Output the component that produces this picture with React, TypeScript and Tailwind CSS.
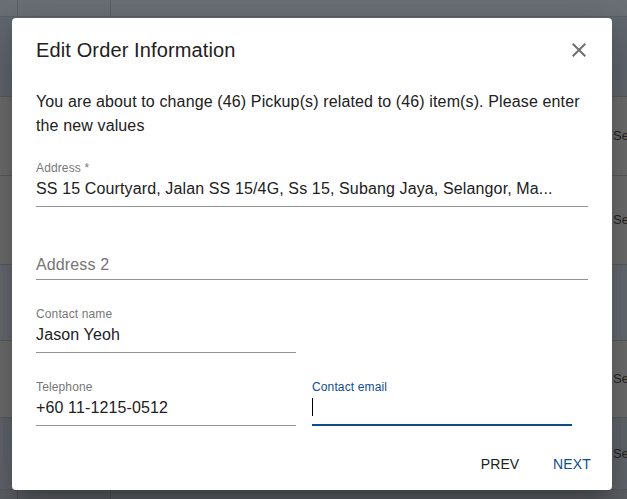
const rows = [
  { h: "h-[80px]", bg: "bg-[#62686f]", cell: "" },
  { h: "h-[79px]", bg: "bg-[#6f6f6f]", cell: "Se" },
  { h: "h-[89px]", bg: "bg-[#6f6f6f]", cell: "Se" },
  { h: "h-[76px]", bg: "bg-[#676c73]", cell: "" },
  { h: "h-[77px]", bg: "bg-[#6f6f6f]", cell: "Se" },
  { h: "h-[72px]", bg: "bg-[#62676d]", cell: "Se" },
];

function Field({
  label,
  value,
  placeholder,
  focused,
}: {
  label?: string;
  value?: string;
  placeholder?: string;
  focused?: boolean;
}) {
  return (
    <div className="flex flex-col">
      <div
        className={`h-[14px] text-xs leading-[14px] ${focused ? "text-[#0d4d8e]" : "text-[#777777]"}`}
      >
        {label}
      </div>
      <div
        className={`flex items-center h-[32px] pt-[4px] pb-[8px] text-base leading-[19px] ${
          focused ? "border-b-2 border-[#0d4d8e]" : "border-b border-[#949494]"
        }`}
      >
        {placeholder ? (
          <span className="pt-[5px] text-[#757575]">{placeholder}</span>
        ) : focused ? (
          <span className="w-px h-[18px] bg-black" />
        ) : (
          <span className="truncate text-[#212121]">{value}</span>
        )}
      </div>
    </div>
  );
}

export default function App() {
  return (
    <div
      className="relative w-[627px] h-[499px] overflow-hidden bg-[#6f6f6f] tracking-[0.008em]"
      style={{ fontFamily: '"Liberation Sans", Arial, sans-serif' }}
    >
      {/* dimmed table behind the dialog */}
      <div className="flex flex-col">
        <div className="flex h-[17px] bg-[#6b7077] border-b border-[#5d6166]">
          <div className="w-[18px] border-r border-[#5d6166]" />
          <div className="w-[93px] border-r border-[#5d6166]" />
        </div>
        {rows.map((r, i) => (
          <div key={i} className={`flex items-center justify-end ${r.h} ${r.bg} border-b border-[#5a5c5e]`}>
            <span className="w-[14px] text-[13px] text-[#262626] overflow-hidden whitespace-nowrap">{r.cell}</span>
          </div>
        ))}
        <div className="flex h-[9px] bg-[#5d6166]">
          <div className="w-[18px] border-r border-[#4f5256]" />
          <div className="w-[93px] border-r border-[#4f5256]" />
        </div>
      </div>

      {/* dialog */}
      <div className="absolute left-[12px] top-[18px] w-[600px] h-[472px] rounded bg-white shadow-[0_11px_15px_-7px_rgba(0,0,0,0.2),0_24px_38px_3px_rgba(0,0,0,0.14),0_9px_46px_8px_rgba(0,0,0,0.12)] flex flex-col">
        <div className="flex items-center justify-between pl-6 pr-[21px] pt-4">
          <h2 className="text-[20px] leading-[32px] text-[#212121]">Edit Order Information</h2>
          <svg width="24" height="24" viewBox="0 0 24 24" className="fill-[#6f6f6f]">
            <path d="M19 6.41L17.59 5 12 10.59 6.41 5 5 6.41 10.59 12 5 17.59 6.41 19 12 13.41 17.59 19 19 17.59 13.41 12z" />
          </svg>
        </div>

        <div className="px-6 mt-6">
          <p className="text-base leading-[24px] text-[#212121]">
            You are about to change (46) Pickup(s) related to (46) item(s). Please enter the new values
          </p>

          <div className="mt-[23px] flex flex-col gap-[27px]">
            <Field label="Address *" value="SS 15 Courtyard, Jalan SS 15/4G, Ss 15, Subang Jaya, Selangor, Ma..." />
            <Field placeholder="Address 2" />
            <div className="grid grid-cols-[260px_260px] gap-x-4">
              <Field label="Contact name" value="Jason Yeoh" />
            </div>
            <div className="grid grid-cols-[260px_260px] gap-x-4">
              <Field label="Telephone" value="+60 11-1215-0512" />
              <Field label="Contact email" focused />
            </div>
          </div>
        </div>

        <div className="mt-auto flex justify-end gap-2 p-2">
          <button className="min-w-[64px] h-9 px-2 text-sm uppercase text-[#212121]">Prev</button>
          <button className="min-w-[64px] h-9 px-2 text-sm uppercase text-[#0d4d8e]">Next</button>
        </div>
      </div>
    </div>
  );
}
